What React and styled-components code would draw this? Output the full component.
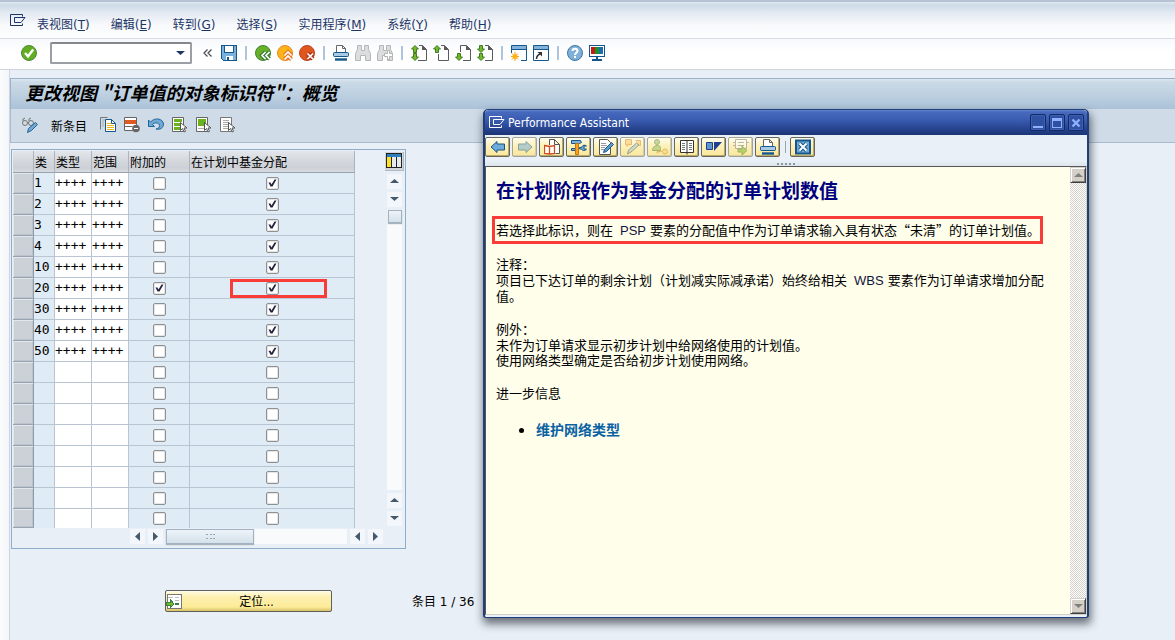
import React from "react";
import styled, { createGlobalStyle } from "styled-components";

const ui = '"DejaVu Sans Condensed", "Noto Sans CJK SC", sans-serif';
const cjk = '"Noto Sans CJK SC", "Liberation Sans", sans-serif';

const Global = createGlobalStyle`
  *, *::before, *::after { box-sizing: border-box; }
  body { margin: 0; font-family: ${ui}; font-size: 12px; color: #000; background: #e8eff6; }
  button, input { font: inherit; color: inherit; margin: 0; padding: 0; }
  button { background: none; border: 0; cursor: pointer; }
  h1, h2, p, ul { margin: 0; padding: 0; }
  svg { display: block; }
`;

const Page = styled.div`
  position: relative;
  display: flex;
  flex-direction: column;
  min-height: 100vh;
  overflow: hidden;
`;

const MenuBar = styled.nav`
  display: flex;
  align-items: center;
  gap: 21px;
  height: 39px;
  padding: 9px 10px 0;
  border-top: 2px solid #b5c3d5;
  border-bottom: 1px solid #d9dce2;
  background: linear-gradient(#e2e9f1 0, #cedae7 3px, #e3eaf2 11px, #f9fafc 24px, #fcfdfe 100%);
  color: #1c3566;
`;
const MenuMark = styled.span`
  margin: 0 -10px 8px 0;
`;
const MenuItem = styled.button`
  height: 20px;
  line-height: 20px;
  font-family: "DejaVu Sans", "Noto Sans CJK SC", sans-serif;
  white-space: nowrap;
`;

const SystemBar = styled.div`
  display: flex;
  align-items: center;
  gap: 6px;
  height: 31px;
  padding: 0 20px 2px;
  border-bottom: 1px solid #d0d3da;
  background: linear-gradient(#f6f8fb, #fff 40%, #fff);
`;
const CommandField = styled.div`
  display: flex;
  align-items: center;
  width: 142px;
  height: 22px;
  margin: 0 3px 0 7px;
  border: 2px solid #9b9fa5;
  border-top-color: #84888d;
  border-radius: 2px;
  background: #fff;
`;
const CommandInput = styled.input`
  flex: 1;
  min-width: 0;
  height: 16px;
  padding: 0 3px;
  border: 0;
  outline: 0;
  background: transparent;
`;
const DropButton = styled.button`
  padding: 0 5px;
`;
const Divider = styled.span`
  width: 2px;
  height: 14px;
  margin: 0 2px;
  background: #afc4dd;
`;
const IconButton = styled.button`
  display: grid;
  place-items: center;
  flex: none;
  width: ${(p) => p.$w || 16}px;
  height: 16px;
`;

const Workspace = styled.main`
  flex: 1;
  padding: 8px 0 0 10px;
  background: linear-gradient(90deg, #fbfcfd 0, #f3f5f9 9px, #cdd5e2 9px, #cdd5e2 10px, #e8eff6 10px);
`;
const Heading = styled.h1`
  height: 31px;
  padding: 0 14px;
  border: 1px solid #9db2c7;
  border-width: 1px 0 0 1px;
  background: linear-gradient(#dce7f0 0, #cbdae7 3px, #bdd0e0 16px, #abc2d8 30px);
  font: italic 700 18px/26px "Noto Sans CJK SC", sans-serif;
  white-space: nowrap;
`;
const AppBar = styled.div`
  display: flex;
  align-items: center;
  gap: 8px;
  height: 34px;
  padding: 0 11px 1px;
  border: 1px solid #a9bccd;
  border-width: 0 0 1px 1px;
  background: #cfdce7;
`;
const TextButton = styled.button`
  margin: 2px 5px 0;
  line-height: 16px;
  font-family: ${cjk};
`;

const TablePanel = styled.section`
  display: grid;
  grid-template-columns: auto 1fr;
  width: 395px;
  height: 400px;
  margin: 6px 0 0 1px;
  padding: 1px;
  border: 1px solid #8fadc9;
`;
const Grid = styled.table`
  width: 342px;
  table-layout: fixed;
  border-collapse: separate;
  border-spacing: 0;
`;
const HeadCell = styled.th`
  height: 22px;
  padding: 1px 1px 0;
  border-right: 1px solid #aab4c0;
  border-bottom: 1px solid #98a2ae;
  background: linear-gradient(#e3e6ea, #d3d7dc 50%, #cdd1d7 80%, #d8dbdf);
  font: 400 12px/20px ${cjk};
  text-align: left;
  white-space: nowrap;
`;
const RowHead = styled.th`
  padding: 0;
  border-right: 1px solid #8f9aab;
  border-bottom: 1px solid #98a2b0;
  background: #ccd1d8;
  box-shadow: inset 1px 1px 0 #e3e7eb, inset -1px -1px 0 #bcc3cd;
`;
const Cell = styled.td`
  position: relative;
  height: ${(p) => (p.$last ? 18 : 21)}px;
  padding: 0;
  border-right: 1px solid #b9c5d3;
  border-bottom: ${(p) => (p.$last ? 0 : 1)}px solid #b9c5d3;
  background: ${(p) => (p.$open ? "#fff" : "#dfebf5")};
  font: 13px/18px "DejaVu Sans Mono", monospace;
`;
const Tick = styled.input.attrs({ type: "checkbox" })`
  appearance: none;
  display: block;
  width: 13px;
  height: 13px;
  margin: 0 auto;
  border: 1px solid #8e9092;
  border-radius: 2px;
  background: #fff;
  box-shadow: inset 0 0 0 1px #e6e6e6;
  &:checked::after {
    content: "";
    display: block;
    width: 11px;
    height: 11px;
    background: #25253f;
    clip-path: polygon(2px 5px, 4px 5px, 5px 7px, 8px 2px, 10px 2px, 6px 9px, 4px 9px);
  }
`;
const Callout = styled.span`
  position: absolute;
  top: 1px;
  left: 40px;
  width: 97px;
  height: 19px;
  border: 3px solid #fa3c38;
`;
const SideRail = styled.div`
  display: flex;
  flex-direction: column;
  align-items: center;
  gap: 3px;
  padding: 1px 0 2px 29px;
`;
const ConfigButton = styled.button`
  display: grid;
  place-items: center;
  width: 19px;
  height: 19px;
  border: 1px solid #b3b9c1;
  border-width: 0 1px 1px 0;
  background: #d3d7dc;
`;
const Arrow = styled.button`
  display: grid;
  place-items: center;
  flex: none;
  width: 15px;
  height: 15px;
  background: #f3f7fb;
`;
const TrackV = styled.div`
  flex: 1;
  width: 15px;
  padding: 0 1px;
  background: #f9fafb;
`;
const TrackH = styled.div`
  flex: 1;
  height: 15px;
  background: #f9fafb;
`;
const Thumb = styled.div`
  display: grid;
  place-items: center;
  width: ${(p) => p.$w}px;
  height: ${(p) => p.$h}px;
  border: 1px solid #a2b2c3;
  background: linear-gradient(#edf3f9, #d5e1eb);
  box-shadow: 0 1px 1px #a9b3bd;
`;
const BottomRail = styled.div`
  grid-column: 1 / -1;
  display: flex;
  gap: 3px;
  height: 19px;
  padding: 1px 21px 0 117px;
`;

const Footer = styled.div`
  display: flex;
  align-items: center;
  gap: 80px;
  margin: 41px 0 0 155px;
`;
const PositionButton = styled.button`
  display: flex;
  align-items: center;
  width: 167px;
  height: 22px;
  border: 1px solid #5f5f5b;
  border-radius: 2px;
  background: linear-gradient(#fffbe2, #fdf0b0 30%, #fdeb98 80%, #d8c268);
  box-shadow: inset 0 1px 0 #fffdf0;
`;
const ButtonText = styled.span`
  flex: 1;
  padding-top: 2px;
  line-height: 18px;
  text-align: center;
`;
const Count = styled.span`
  padding-top: 2px;
  line-height: 18px;
  font-family: "DejaVu Sans", "Noto Sans CJK SC", sans-serif;
`;

const Dialog = styled.aside`
  position: absolute;
  top: 109px;
  left: 483px;
  display: flex;
  flex-direction: column;
  width: 606px;
  height: 509px;
  border: 1px solid #223e78;
  border-width: 1px 2px;
  border-radius: 5px 5px 3px 3px;
  background: #e9f0f7;
  box-shadow: 1px 5px 8px 1px rgba(40, 48, 58, 0.65);
`;
const TitleBar = styled.header`
  display: flex;
  align-items: center;
  gap: 3px;
  height: 25px;
  padding: 0 3px 0 4px;
  border-radius: 4px 4px 0 0;
  background: linear-gradient(#6686cf 0, #4669be 2px, #3a5cb0 10px, #23408a 20px, #1c3474);
  color: #fff;
`;
const DialogTitle = styled.h2`
  flex: 1;
  font-size: 12px;
  font-weight: 400;
  line-height: 20px;
`;
const WindowButton = styled.button`
  display: grid;
  place-items: center;
  width: 16px;
  height: 17px;
  border: 1px solid #122b66;
  border-radius: 2px;
  background: #2f51a2;
  box-shadow: inset 0 0 0 1px #3d60b4;
`;
const DialogTools = styled.div`
  display: flex;
  align-items: flex-start;
  gap: 2px;
  height: 26px;
  padding-top: 2px;
`;
const Tool = styled.button`
  display: grid;
  place-items: center;
  width: 25px;
  height: 20px;
  border: 1px solid ${(p) => (p.$off ? "#a5a391" : "#68675d")};
  border-radius: 2px;
  background: linear-gradient(#fffdf0, #fdf2bd 40%, #fbe79a);
  box-shadow: inset -1px -1px 0 ${(p) => (p.$off ? "#d5cda4" : "#b9a968")};
  & > svg { opacity: ${(p) => (p.$off ? 0.5 : 1)}; }
`;
const ToolDivider = styled.span`
  width: 1px;
  height: 12px;
  margin: 4px 2px 0 3px;
  background: #9aa4ae;
`;
const Grip = styled.div`
  display: flex;
  justify-content: center;
  align-items: center;
  gap: 2px;
  height: 5px;
  background: linear-gradient(#e9f0f7, #dbe5ea);
`;
const GripDot = styled.span`
  width: 2px;
  height: 2px;
  background: #8d98a3;
`;
const Viewer = styled.div`
  flex: 1;
  display: flex;
  min-height: 0;
  margin-bottom: 2px;
  border: 1px solid;
  border-color: #55565a #d4d0c8 #d4d0c8 #55565a;
`;
const Article = styled.article`
  flex: 1;
  padding: 12px 20px 0 10px;
  background: #fefeeb;
  font: 13px/15px ${cjk};
`;
const ArticleTitle = styled.h2`
  color: #00007f;
  font: 700 19px/22px "Noto Sans CJK SC", sans-serif;
`;
const Marked = styled.p`
  width: fit-content;
  margin: 15px 0 12px -4px;
  padding: 3px 0 3px 1px;
  border: 3px solid #fa3c38;
  white-space: nowrap;
`;
const Term = styled.p`
  line-height: 16px;
`;
const Para = styled.p`
  margin-bottom: 18px;
`;
const Latin = styled.span`
  margin: 0 4px 0 7px;
  color: #14143c;
  font-family: "Liberation Sans", sans-serif;
`;
const Links = styled.ul`
  padding-left: 40px;
  margin-top: 21px;
  font-size: 14px;
  line-height: 16px;
`;
const Link = styled.a`
  color: #0a62a4;
  font-weight: 700;
  text-decoration: none;
`;
const ClassicRail = styled.div`
  display: flex;
  flex-direction: column;
  justify-content: space-between;
  width: 16px;
  background: repeating-conic-gradient(#d4d0c8 0 25%, #fff 0 50%) 0 0 / 2px 2px;
`;
const ClassicArrow = styled.button`
  display: grid;
  place-items: center;
  width: 16px;
  height: 16px;
  border: 1px solid;
  border-color: #d4d0c8 #404040 #404040 #d4d0c8;
  background: #d4d0c8;
  box-shadow: inset 1px 1px 0 #fff, inset -1px -1px 0 #808080;
`;

function Svg({ w = 16, h = 16, crisp, children }) {
  return (
    <svg width={w} height={h} viewBox={`0 0 ${w} ${h}`} fill="none" aria-hidden="true" shapeRendering={crisp ? "crispEdges" : "auto"}>
      {children}
    </svg>
  );
}

const PageShape = ({ d }) => (
  <>
    <path d={d} stroke="#5b5b5b" />
    <path d="M11 0l5 5h-5z" fill="#5b5b5b" />
  </>
);
const Up = ({ y = 0 }) => <path d={`M4 ${y + 0.5}l3.5 3.500h-2v3.500h-3v-3.500h-2z`} fill="#76b82a" stroke="#3f7d23" />;
const Down = ({ y = 0 }) => <path d={`M4 ${y + 7.5}l3.5-3.500h-2v-3.500h-3v3.500h-2z`} fill="#76b82a" stroke="#3f7d23" />;
const Pointer = () => <path d="M8.500 5.500v8l2-2 1.500 3.500 1.500-.7-1.500-3.300h3z" fill="#fff" stroke="#555" />;
const Binoculars = () => (
  <path d="M2.500.5h4v5h3v-5h4v4l2 4v7h-5v-5h-5v5h-5v-7l2-4z" fill="#dcddde" stroke="#b4b6b8" />
);
const Badge = ({ fill, rim, edge, d }) => (
  <>
    <circle cx="8" cy="8" r="7.500" fill={fill} stroke={rim} />
    <path d={d} stroke={edge} strokeWidth="4" />
    <path d={d} stroke="#fff" strokeWidth="1.700" />
  </>
);

const icons = {
  mark: <Svg w={16} h={13}><path d="M12.500 2.500v-2H.5v11h12v-2" stroke="currentColor" /><path d="M15 3.500H4.500v5h6.500z" stroke="currentColor" /></Svg>,
  ok: <Svg><circle cx="8" cy="8" r="7.500" fill="#62ae22" stroke="#4b8738" /><path d="M4 8l3 3.300L12.200 4.500" stroke="#fff" strokeWidth="2.400" /></Svg>,
  chev: <Svg w={10} h={8}><path d="M4.500.5L1 4l3.500 3.500M8.500.5L5 4l3.500 3.500" stroke="#4c5157" strokeWidth="1.300" /></Svg>,
  save: <Svg crisp><path d="M0 0h16v16H2l-2-2z" fill="#14578c" /><path d="M1 1h2v7h10V1h2v14H2l-1-1z" fill="#79b1dc" /><path d="M4 1h8v6H4zM5 11h7v4H5z" fill="#fff" /><path d="M6 12h2v3H6z" fill="#14578c" /></Svg>,
  back: <Svg><Badge fill="#67b126" rim="#3f8339" edge="#387b35" d="M10.500 7l-3.500 3.500 3.500 3.500M14.500 7l-3.500 3.500 3.500 3.500" /></Svg>,
  exit: <Svg><Badge fill="#fcb518" rim="#e7872a" edge="#ea7420" d="M7.500 10.500L11 7l3.500 3.500M7.500 14.500L11 11l3.500 3.500" /></Svg>,
  stop: <Svg><Badge fill="#df571c" rim="#b94223" edge="#b03418" d="M8.500 8.500l5.500 5.500M14 8.500L8.500 14" /></Svg>,
  print: <Svg><path d="M3.500 7V.5h6l3 3V7M9.500.5v3h3" fill="#fff" stroke="#666" /><rect x=".5" y="7.500" width="15" height="4" rx="1" fill="#a9cae6" stroke="#14578c" /><path d="M2 14.500h12" stroke="#14578c" strokeWidth="2.400" /></Svg>,
  find: <Svg><Binoculars /></Svg>,
  findNext: <Svg><Binoculars /><path d="M10.500 5.500h2v3h3v3h-3v3h-2v-3h-3v-3h3z" fill="#fff" stroke="#b2b4b6" /></Svg>,
  first: <Svg><PageShape d="M8 .5h3.500l4 4v11H7" /><Up /><Down y={8} /></Svg>,
  prev: <Svg><PageShape d="M8 .5h3.500l4 4v11h-10V9" /><Up /></Svg>,
  next: <Svg><PageShape d="M5.500 7V.5h6l4 4v11H8" /><Down y={8} /></Svg>,
  last: <Svg><PageShape d="M8 .5h3.500l4 4v11H8" /><Down /><Down y={8} /></Svg>,
  session: <Svg><path d="M.5 8V.5h15v15H10" stroke="#14578c" /><path d="M1 1h14v3H1z" fill="#83b3da" /><path d="M1 4.500h14" stroke="#14578c" /><path d="M4 7v9M0 11.500h8M1 8.500l6 6M7 8.500l-6 6" stroke="#f59e19" /><circle cx="4" cy="11.500" r="2.500" fill="#ffb414" /></Svg>,
  shortcut: <Svg><path d="M.5.5h15v15H.5z" fill="#fff" stroke="#14578c" /><path d="M1 1h14v3H1z" fill="#83b3da" /><path d="M1 4.500h14" stroke="#14578c" /><path d="M3.500 14c0-3 1-4 3.500-5" stroke="#333" strokeWidth="1.500" /><path d="M4.500 7H9v4.500z" fill="#333" /></Svg>,
  help: <Svg><circle cx="8" cy="8" r="7.500" fill="#7fb0d9" stroke="#3e77a5" /><path d="M5.500 6c0-3 5-3 5 0 0 1.700-2.500 1.700-2.500 4M8 11v2" stroke="#fff" strokeWidth="2" /></Svg>,
  monitor: <Svg crisp><path d="M0 0h16v12H0z" fill="#14578c" /><path d="M1 1h14v10H1z" fill="#fff" /><path d="M2 2h4v7H2z" fill="#c81919" /><path d="M6 2h4v7H6z" fill="#18961f" /><path d="M10 2h4v7h-4z" fill="#1c6bb5" /><path d="M7 12h2v2h4v2H3v-2h4z" fill="#14578c" /></Svg>,
  toggle: <Svg><circle cx="3" cy="6" r="2.500" stroke="#777" /><circle cx="9" cy="6" r="2.500" stroke="#777" /><path d="M1 4V2l2-1M7 4V2l2-1M5.500 5.500h1" stroke="#777" /><path d="M5.500 15.500l1-4 7-6 2 2-6 6z" fill="#72a9d4" stroke="#1d669b" /></Svg>,
  copy: <Svg><path d="M.5 12.500V.5h7" stroke="#777" /><path d="M2 3h4M2 5h2M2 7h2M2 9h2" stroke="#aaa" /><path d="M5.500 2.500h6l4 4v8h-10z" fill="#fff" stroke="#14578c" /><path d="M7 6.500h4M7 8.500h7M7 10.500h7M7 12.500h7" stroke="#f1b51c" /><path d="M11.500 2.500v4h4" stroke="#14578c" /></Svg>,
  remove: <Svg><path d="M.5.5h12v13H.5zM.5 9.500h8" fill="#fff" stroke="#666" /><path d="M1 3h11v4H1z" fill="#dd5a20" /><circle cx="12" cy="11.500" r="3.800" fill="#666" /><path d="M10 11.500h4" stroke="#fff" /></Svg>,
  undo: <Svg><path d="M.5 3v6.500h6L4.500 7.500C7 5 11 5.500 11.500 8.500c0 2-1 3-3.500 3.500 4 1 7.500-1 7.500-5C15 1.500 7 0 2.500 5z" fill="#72a9d4" stroke="#1d669b" /></Svg>,
  all: <Svg><path d="M.5.5h11v14H.5z" fill="#fff" stroke="#666" /><path d="M2 3.500h8M2 7.500h7M2 11.500h7" stroke="#6bb21f" strokeWidth="3" /><Pointer /></Svg>,
  block: <Svg><path d="M.5.5h11v14H.5z" fill="#fff" stroke="#666" /><path d="M2 2h8v7H2z" fill="#6bb21f" /><path d="M2 11.500h6" stroke="#aaa" /><Pointer /></Svg>,
  none: <Svg><path d="M.5.5h11v14H.5z" fill="#fff" stroke="#777" /><path d="M3 3.500h6M3 5.500h6M3 7.500h5M3 9.500h5M3 11.500h5" stroke="#aaa" /><Pointer /></Svg>,
  config: <Svg crisp><path d="M0 0h16v15H0z" fill="#222" /><path d="M1 1h14v3H1z" fill="#2d7dc0" /><path d="M1 4h4v10H1z" fill="#ffe227" /><path d="M6 4h4v10H6zM11 4h4v10h-4z" fill="#e8ebee" /></Svg>,
  position: <Svg crisp><path d="M1 1h14v14H1z" fill="#fff" stroke="#777" /><path d="M2 4h5M9 4h4M9 7h4" stroke="#bbb" /><path d="M9 10h4v2H9z" fill="#377f42" /><path d="M0 9h4V6l4 5-4 4v-3H0z" fill="#76b82a" stroke="#377f42" /></Svg>,
  left: <Svg><path d="M1 8l6-5.500V5h7.500v6H7v2.500z" fill="#70aad8" stroke="#14578c" /></Svg>,
  right: <Svg><path d="M15 8L9 2.500V5H1.500v6H9v2.500z" fill="#70aad8" stroke="#14578c" /></Svg>,
  book: <Svg><path d="M5.500 6V.5h5l5 5v9h-4M10.500.5v5h5" fill="#fff" stroke="#555" /><path d="M.5 6.500l5 1 5-1v8l-5 .5-5-.5zM5.500 7.500V15" fill="#fff" stroke="#cf4c1d" strokeWidth="1.300" /></Svg>,
  tools: <Svg><path d="M.5 1.500h9l1 2-2 1h-8zM.5 9.500h4v2h-4z" fill="#7fb0d9" stroke="#14578c" /><path d="M4.500 4.500h3v11h-3z" fill="#fba21a" stroke="#c07414" /><path d="M8.500 8.500h2c1-3 4-2.500 5-1.500h-2.500v3h2.500c-1 2-4 2-5 0h-2z" fill="#7fb0d9" stroke="#14578c" /></Svg>,
  edit: <Svg><path d="M1.500.5h8l3 3v12h-11z" fill="#fff" stroke="#555" /><path d="M3 4.500h5M3 6.500h6M3 8.500h4M3 10.500h3" stroke="#999" /><path d="M5.500 13.500l1-3 7-7 2 2-7 7z" fill="#5c9bca" stroke="#14578c" /></Svg>,
  swap: <Svg><path d="M.5.5h6v5h-3l-1.500 2v-2h-1.500zM10.500 1.500h5v5h-3" fill="#fbc65d" stroke="#d97b22" /><path d="M2.500 15l1-4 8-7 2.500 2-8 7z" fill="#a3c3cd" stroke="#375f74" /></Svg>,
  user: <Svg><circle cx="5" cy="3" r="2.500" fill="#8fbd5a" stroke="#4c7d3b" /><path d="M.5 11.500c0-3 2-5 5-5s3 2 3 3v2z" fill="#8fbd5a" stroke="#4c7d3b" /><circle cx="13" cy="12.500" r="2.500" fill="#fbd56d" stroke="#cc8a2a" /><path d="M10 12.500H5v2M7 12v2" stroke="#cc8a2a" /></Svg>,
  pages: <Svg><path d="M1.500 1.500h13v12h-13zM8 1.500v14" fill="#fff" stroke="#333" /><path d="M3 4.500h3M10 4.500h3M3 6.500h3M10 6.500h3M3 8.500h3M10 8.500h3M3 10.500h3M10 10.500h3" stroke="#777" /></Svg>,
  flag: <Svg><path d="M.5 3.500h6v7h-6z" fill="#5b96cc" stroke="#213f91" /><path d="M8 3h8l-8 9z" fill="#213f91" /></Svg>,
  send: <Svg><path d="M2.500.5h11v9h-11zM0 3.500h2M0 6.500h2M14 3.500h2" fill="#fff" stroke="#777" /><path d="M5 3.500h6M5 6.500h6" stroke="#777" /><path d="M5 10h4V7l5 4.500L9 16v-3H5z" fill="#76b82a" stroke="#3f7d23" /></Svg>,
  close: <Svg><path d="M1 1.500h14v13H1z" fill="#73a9d3" stroke="#14578c" strokeWidth="2" /><path d="M4.500 4.500l7 7M11.500 4.500l-7 7" stroke="#14578c" strokeWidth="4" /><path d="M4.500 4.500l7 7M11.500 4.500l-7 7" stroke="#fff" strokeWidth="2" /></Svg>,
};

function Triangle({ dir, color = "#44596b" }) {
  const d = { up: "M0 6l4.500-4L9 6z", down: "M0 2h9L4.500 6z", left: "M7 0v9L2 4.500z", right: "M2 0v9l5-4.500z" }[dir];
  return <Svg w={9} h={dir === "up" || dir === "down" ? 9 : 9}><path d={d} fill={color} /></Svg>;
}

const menus = [["表视图", "T"], ["编辑", "E"], ["转到", "G"], ["选择", "S"], ["实用程序", "M"], ["系统", "Y"], ["帮助", "H"]];
const systemTools = [
  ["save", "保存"], null, ["back", "返回"], ["exit", "退出"], ["stop", "取消"], null,
  ["print", "打印"], ["find", "查找"], ["findNext", "继续查找"], null,
  ["first", "第一页"], ["prev", "上一页"], ["next", "下一页"], ["last", "最后一页"], null,
  ["session", "新建会话"], ["shortcut", "快捷方式"], null, ["help", "帮助"], ["monitor", "布局"],
];
const appTools = [["copy", "复制"], ["remove", "删除"], ["undo", "撤消"], ["all", "全选"], ["block", "选择块"], ["none", "取消全选"]];
const dialogTools = [
  ["left", "后退"], ["right", "前进", true], ["book", "应用帮助"], ["tools", "技术信息"], ["edit", "编辑"],
  ["swap", "定制", true], ["user", "权限", true], ["pages", "词汇表"], ["flag", "SAP"], ["send", "发送", true], ["print", "打印"],
];
const keys = ["1", "2", "3", "4", "10", "20", "30", "40", "50"];
const rows = Array.from({ length: 17 }, (_, i) => ({ key: keys[i] || "", mask: keys[i] ? "++++" : "", extra: keys[i] === "20", fund: i < keys.length }));

export default function App() {
  return (
    <Page lang="zh-CN">
      <Global />
      <MenuBar>
        <MenuMark>{icons.mark}</MenuMark>
        {menus.map(([label, key]) => (
          <MenuItem key={key}>{label}(<u>{key}</u>)</MenuItem>
        ))}
      </MenuBar>
      <SystemBar>
        <IconButton aria-label="确认" $w={17}>{icons.ok}</IconButton>
        <CommandField>
          <CommandInput aria-label="命令" />
          <DropButton aria-label="命令历史"><Triangle dir="down" color="#1c3566" /></DropButton>
        </CommandField>
        <IconButton aria-label="收起" $w={14}>{icons.chev}</IconButton>
        {systemTools.map((tool, i) =>
          tool ? <IconButton key={i} aria-label={tool[1]}>{icons[tool[0]]}</IconButton> : <Divider key={i} />
        )}
      </SystemBar>
      <Workspace>
        <Heading>更改视图 "订单值的对象标识符"：概览</Heading>
        <AppBar>
          <IconButton aria-label="显示/更改">{icons.toggle}</IconButton>
          <TextButton>新条目</TextButton>
          {appTools.map(([name, label]) => (
            <IconButton key={name} aria-label={label}>{icons[name]}</IconButton>
          ))}
        </AppBar>
        <TablePanel>
          <Grid>
            <colgroup>
              {[21, 21, 37, 37, 61, 165].map((w, i) => <col key={i} width={w} />)}
            </colgroup>
            <thead>
              <tr>
                <HeadCell />
                {["类", "类型", "范围", "附加的", "在计划中基金分配"].map((t) => <HeadCell key={t} scope="col">{t}</HeadCell>)}
              </tr>
            </thead>
            <tbody>
              {rows.map((r, i) => {
                const last = i === rows.length - 1;
                return (
                  <tr key={i}>
                    <RowHead scope="row" aria-label={`行 ${i + 1}`} />
                    <Cell $last={last}>{r.key}</Cell>
                    <Cell $last={last} $open>{r.mask}</Cell>
                    <Cell $last={last} $open>{r.mask}</Cell>
                    <Cell $last={last}><Tick aria-label="附加的" defaultChecked={r.extra} /></Cell>
                    <Cell $last={last}>
                      <Tick aria-label="在计划中基金分配" defaultChecked={r.fund} />
                      {r.extra && <Callout />}
                    </Cell>
                  </tr>
                );
              })}
            </tbody>
          </Grid>
          <SideRail>
            <ConfigButton aria-label="表设置">{icons.config}</ConfigButton>
            <Arrow aria-label="向上"><Triangle dir="up" /></Arrow>
            <Arrow aria-label="向下"><Triangle dir="down" /></Arrow>
            <TrackV><Thumb $w={14} $h={13} /></TrackV>
            <Arrow aria-label="上移"><Triangle dir="up" /></Arrow>
            <Arrow aria-label="下移"><Triangle dir="down" /></Arrow>
          </SideRail>
          <BottomRail>
            <Arrow aria-label="向左"><Triangle dir="left" /></Arrow>
            <Arrow aria-label="向右"><Triangle dir="right" /></Arrow>
            <TrackH>
              <Thumb $w={88} $h={15}>
                <Svg w={9} h={6} crisp><path d="M0 1h2M4 1h2M7 1h2M0 5h2M4 5h2M7 5h2" stroke="#95a5b5" /></Svg>
              </Thumb>
            </TrackH>
            <Arrow aria-label="左移"><Triangle dir="left" /></Arrow>
            <Arrow aria-label="右移"><Triangle dir="right" /></Arrow>
          </BottomRail>
        </TablePanel>
        <Footer>
          <PositionButton>{icons.position}<ButtonText>定位...</ButtonText></PositionButton>
          <Count>条目 1 / 36</Count>
        </Footer>
      </Workspace>
      <Dialog role="dialog" aria-label="Performance Assistant">
        <TitleBar>
          {icons.mark}
          <DialogTitle>Performance Assistant</DialogTitle>
          <WindowButton aria-label="最小化"><Svg w={10} h={10} crisp><path d="M0 8h10v2H0z" fill="#8fb0ff" /></Svg></WindowButton>
          <WindowButton aria-label="最大化"><Svg w={10} h={10} crisp><path d="M0 0h10v10H0zM1 3v6h8V3z" fillRule="evenodd" fill="#8fb0ff" /></Svg></WindowButton>
          <WindowButton aria-label="关闭"><Svg w={10} h={10}><path d="M1.500 1.500l7 7M8.500 1.500l-7 7" stroke="#8fb0ff" strokeWidth="2.400" /></Svg></WindowButton>
        </TitleBar>
        <DialogTools>
          {dialogTools.map(([name, label, off]) => (
            <Tool key={name} aria-label={label} $off={off}>{icons[name]}</Tool>
          ))}
          <ToolDivider />
          <Tool aria-label="关闭助手">{icons.close}</Tool>
        </DialogTools>
        <Grip>{[0, 1, 2, 3, 4].map((n) => <GripDot key={n} />)}</Grip>
        <Viewer>
          <Article>
            <ArticleTitle>在计划阶段作为基金分配的订单计划数值</ArticleTitle>
            <Marked>若选择此标识，则在<Latin>PSP</Latin>要素的分配值中作为订单请求输入具有状态“未清”的订单计划值。</Marked>
            <Term>注释：</Term>
            <Para>项目已下达订单的剩余计划（计划减实际减承诺）始终给相关<Latin>WBS</Latin>要素作为订单请求增加分配值。</Para>
            <Term>例外：</Term>
            <Para>未作为订单请求显示初步计划中给网络使用的计划值。<br />使用网络类型确定是否给初步计划使用网络。</Para>
            <p>进一步信息</p>
            <Links><li><Link href="#network-types">维护网络类型</Link></li></Links>
          </Article>
          <ClassicRail>
            <ClassicArrow aria-label="向上滚动"><Triangle dir="up" color="#808080" /></ClassicArrow>
            <ClassicArrow aria-label="向下滚动"><Triangle dir="down" color="#808080" /></ClassicArrow>
          </ClassicRail>
        </Viewer>
      </Dialog>
    </Page>
  );
}
